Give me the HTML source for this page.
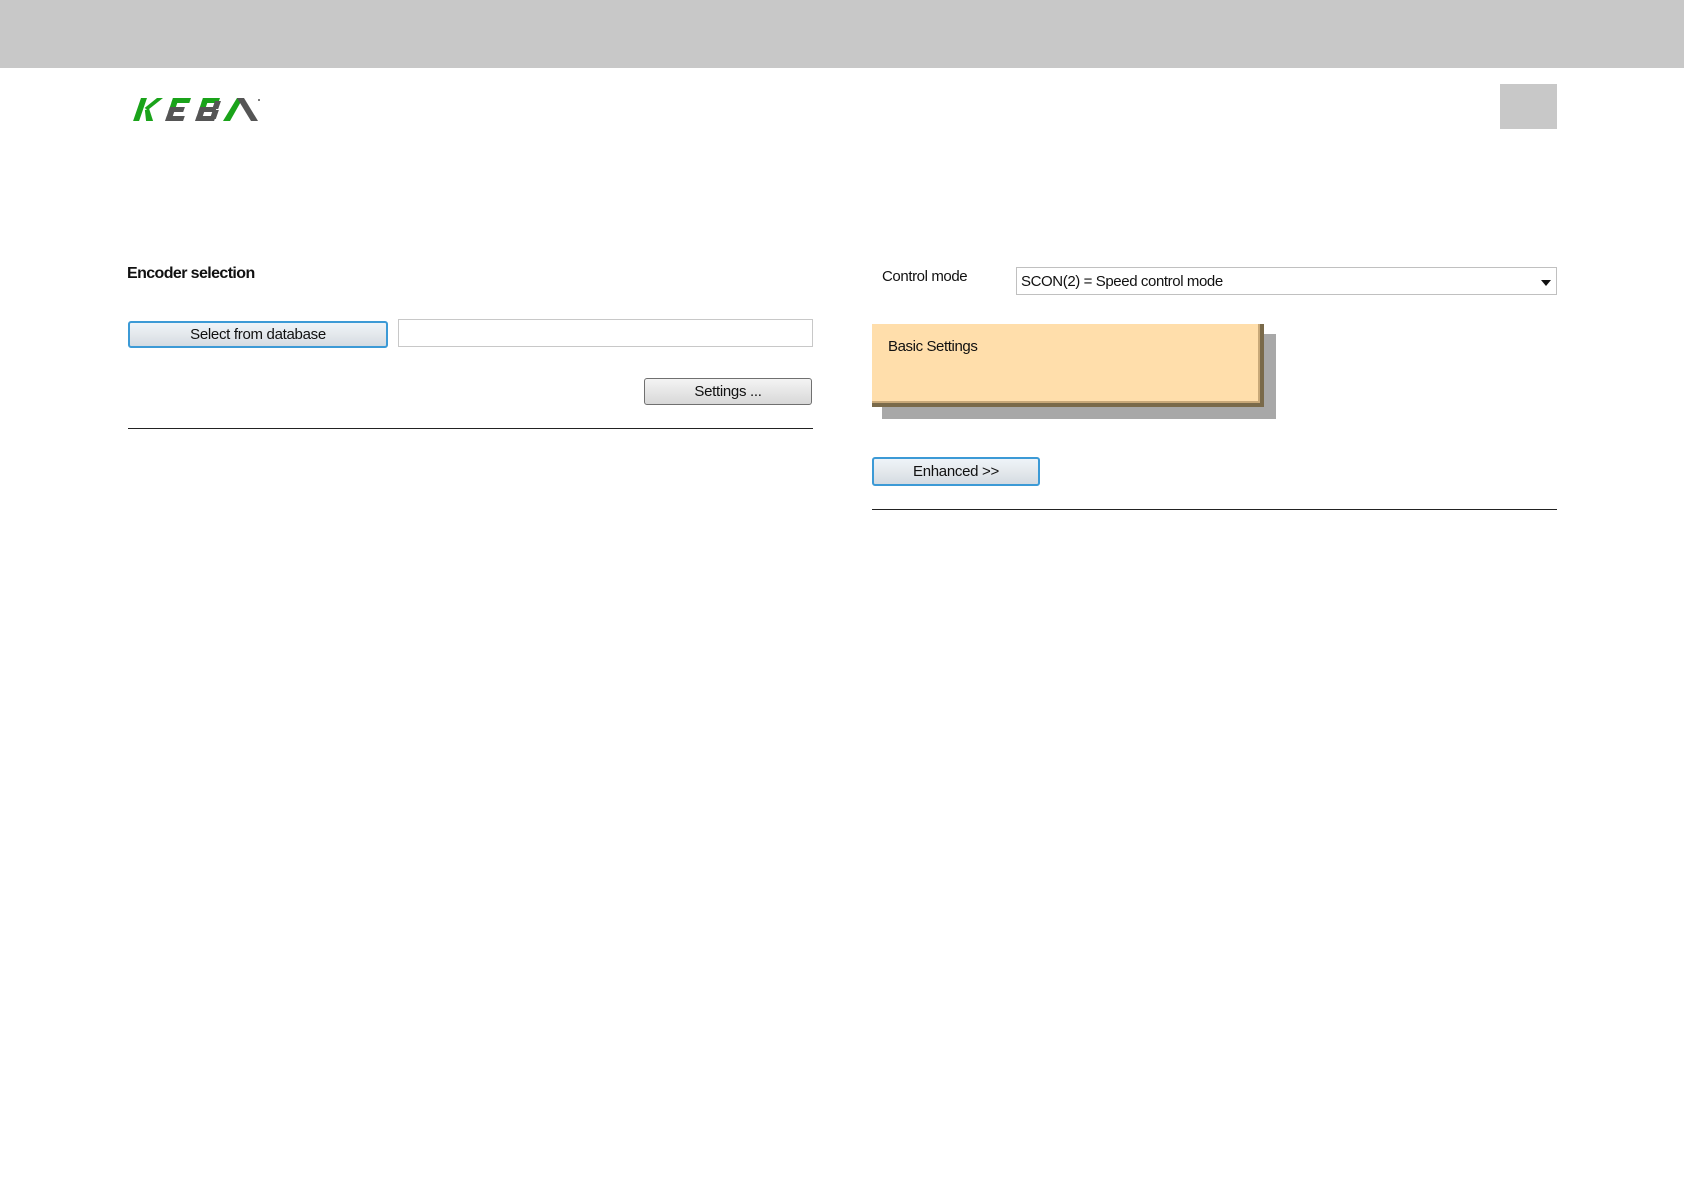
<!DOCTYPE html>
<html><head><style>
body{margin:0;width:1684px;height:1191px;background:#fff;position:relative;overflow:hidden;font-family:"Liberation Sans",sans-serif;}
.a{position:absolute}
.btn{position:absolute;box-sizing:border-box;border:1px solid #707070;border-radius:3px;background:linear-gradient(#f4f4f4,#e6e6e6 50%,#d8d8d8);font-size:15px;text-align:center;color:#111;letter-spacing:-0.3px}
.blue{border:2px solid #3c9ad6;background:linear-gradient(#eef4f9,#e4e8ec 50%,#d4dbe2)}
</style></head><body>
<div class="a" style="left:0;top:0;width:1684px;height:68px;background:#c8c8c8"></div>
<div class="a" style="left:1500px;top:84px;width:57px;height:45px;background:#c8c8c8"></div>
<svg class="a" style="left:120px;top:98px" width="150" height="24" viewBox="0 0 150 24">
<g transform="translate(8,0) skewX(-19)">
<!-- K -->
<rect x="13" y="0" width="6" height="23" fill="#1aa31a"/>
<polygon points="20,10 29,0 35,0 24,12" fill="#1aa31a"/>
<polygon points="21,12 25,11 33,23 26,23" fill="#1aa31a"/>
<!-- E -->
<rect x="45" y="0" width="6" height="12" fill="#1aa31a"/>
<rect x="45" y="0" width="18" height="5" fill="#1aa31a"/>
<rect x="45" y="12" width="6" height="11" fill="#555"/>
<rect x="45" y="9" width="15" height="5" fill="#555"/>
<rect x="45" y="18" width="18" height="5" fill="#555"/>
<!-- B -->
<rect x="75" y="0" width="17" height="5" fill="#1aa31a"/>
<rect x="75" y="0" width="6" height="9" fill="#1aa31a"/>
<rect x="75" y="9" width="6" height="14" fill="#555"/>
<rect x="75" y="9" width="17" height="5" fill="#555"/>
<rect x="75" y="18" width="19" height="5" fill="#555"/>
<rect x="88" y="3" width="6" height="8" fill="#555"/>
<rect x="89" y="12" width="6" height="9" fill="#555"/>
</g>
<!-- A -->
<polygon points="103,23 110,23 123,0 117,0" fill="#1aa31a"/>
<polygon points="117,0 124,0 138,23 131,23" fill="#555"/>
<circle cx="139" cy="2" r="1" fill="#555"/>
</svg>
<div class="a" style="left:127px;top:265px;font-size:16px;font-weight:bold;letter-spacing:-0.6px;color:#111">Encoder selection</div>
<div class="btn blue" style="left:128px;top:321px;width:260px;height:27px;line-height:24px">Select from database</div>
<div class="a" style="left:398px;top:319px;width:415px;height:28px;box-sizing:border-box;border:1px solid #c8c8c8;background:#fff"></div>
<div class="btn" style="left:644px;top:378px;width:168px;height:27px;line-height:26px">Settings ...</div>
<div class="a" style="left:128px;top:428px;width:685px;height:1px;background:#222"></div>
<div class="a" style="left:882px;top:268px;font-size:15px;color:#111;letter-spacing:-0.4px">Control mode</div>
<div class="a" style="left:1016px;top:267px;width:541px;height:28px;box-sizing:border-box;border:1px solid #c0c0c0;background:#fff;font-size:15px;line-height:28px;padding-left:4px;color:#111;letter-spacing:-0.4px">SCON(2) = Speed control mode</div>
<div class="a" style="left:1541px;top:280px;width:0;height:0;border-left:5px solid transparent;border-right:5px solid transparent;border-top:6px solid #111"></div>
<div class="a" style="left:882px;top:334px;width:394px;height:85px;background:#a8a8a8"></div>
<div class="a" style="left:872px;top:324px;width:392px;height:83px;box-sizing:border-box;background:#ffdeab;border-right:4px solid #7a6a4a;border-bottom:4px solid #7a6a4a;box-shadow:inset -2px -2px 0 #c8a878"></div>
<div class="a" style="left:888px;top:338px;font-size:15px;color:#111;letter-spacing:-0.4px">Basic Settings</div>
<div class="btn blue" style="left:872px;top:457px;width:168px;height:29px;line-height:26px">Enhanced &gt;&gt;</div>
<div class="a" style="left:872px;top:509px;width:685px;height:1px;background:#222"></div>
</body></html>
